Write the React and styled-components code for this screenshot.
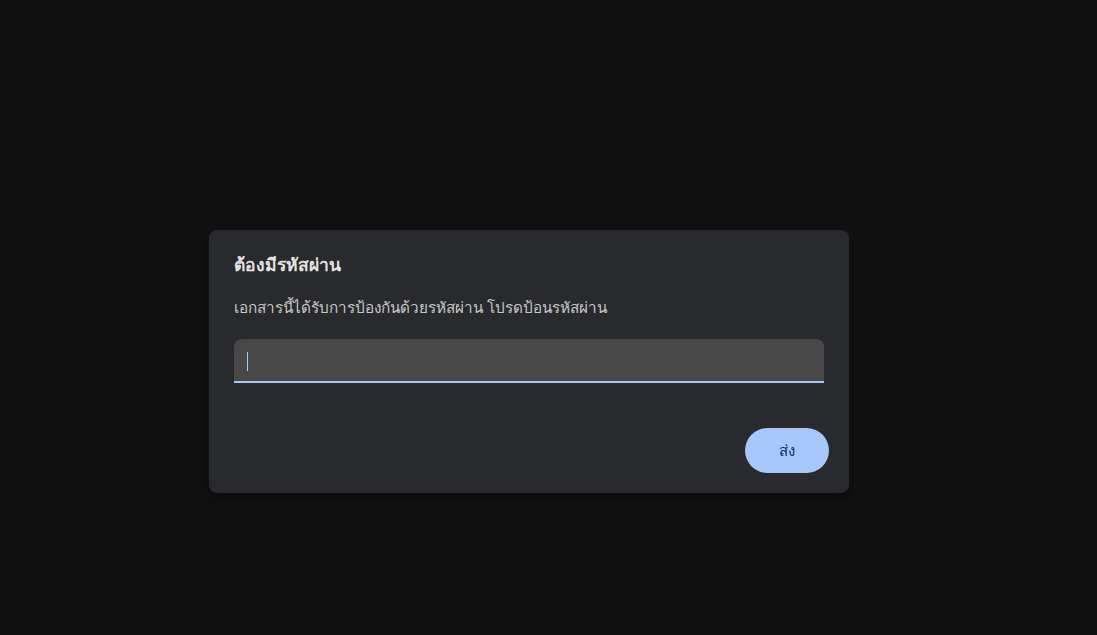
import React from 'react';
import styled, { createGlobalStyle } from 'styled-components';

const GlobalStyle = createGlobalStyle`
  html, body {
    margin: 0;
    padding: 0;
    background: #111111;
  }
  body {
    font-family: Roboto, "Noto Sans", "DejaVu Sans", sans-serif;
  }
`;

const Page = styled.div`
  width: 100vw;
  height: 100vh;
  box-sizing: border-box;
  padding: 230px 0 0 209px;
  background: #111111;
`;

const Dialog = styled.div`
  width: 640px;
  height: 263px;
  box-sizing: border-box;
  background: #292a2d;
  border-radius: 8px;
  box-shadow: 0 4px 12px rgba(0, 0, 0, 0.45);
  padding: 23px 20px 20px 25px;
  display: flex;
  flex-direction: column;
`;

const Title = styled.h2`
  margin: 0;
  font-size: 17.5px;
  font-weight: 700;
  line-height: 24px;
  color: #e3e3e3;
`;

const Message = styled.p`
  margin: 21px 0 0;
  font-size: 15.3px;
  line-height: 20px;
  color: #c7c7c7;
`;

const Field = styled.div`
  margin-top: 21px;
  width: 590px;
  height: 44px;
  box-sizing: border-box;
  background: #474847;
  border-radius: 8px 8px 0 0;
  border-bottom: 2px solid #a8c7fa;
  display: flex;
  align-items: center;
  padding: 0 12px;
  position: relative;
`;

const Input = styled.input`
  flex: 1;
  background: transparent;
  border: none;
  outline: none;
  color: #e3e3e3;
  caret-color: #a8c7fa;
  font-size: 16px;
  font-family: inherit;
  padding: 0;
`;

const Caret = styled.span`
  position: absolute;
  left: 13px;
  top: 13px;
  width: 1px;
  height: 19px;
  background: #a8c7fa;
`;

const Actions = styled.div`
  margin-top: auto;
  display: flex;
  justify-content: flex-end;
`;

const SubmitButton = styled.button`
  width: 84px;
  height: 45px;
  border: none;
  border-radius: 23px;
  background: #a8c7fa;
  color: #062e6f;
  font-family: inherit;
  font-size: 15px;
  font-weight: 500;
  cursor: pointer;
`;

export default function App() {
  return (
    <Page>
      <GlobalStyle />
      <Dialog>
        <Title>ต้องมีรหัสผ่าน</Title>
        <Message>เอกสารนี้ได้รับการป้องกันด้วยรหัสผ่าน โปรดป้อนรหัสผ่าน</Message>
        <Field>
          <Caret />
          <Input type="password" aria-label="รหัสผ่าน" />
        </Field>
        <Actions>
          <SubmitButton>ส่ง</SubmitButton>
        </Actions>
      </Dialog>
    </Page>
  );
}
